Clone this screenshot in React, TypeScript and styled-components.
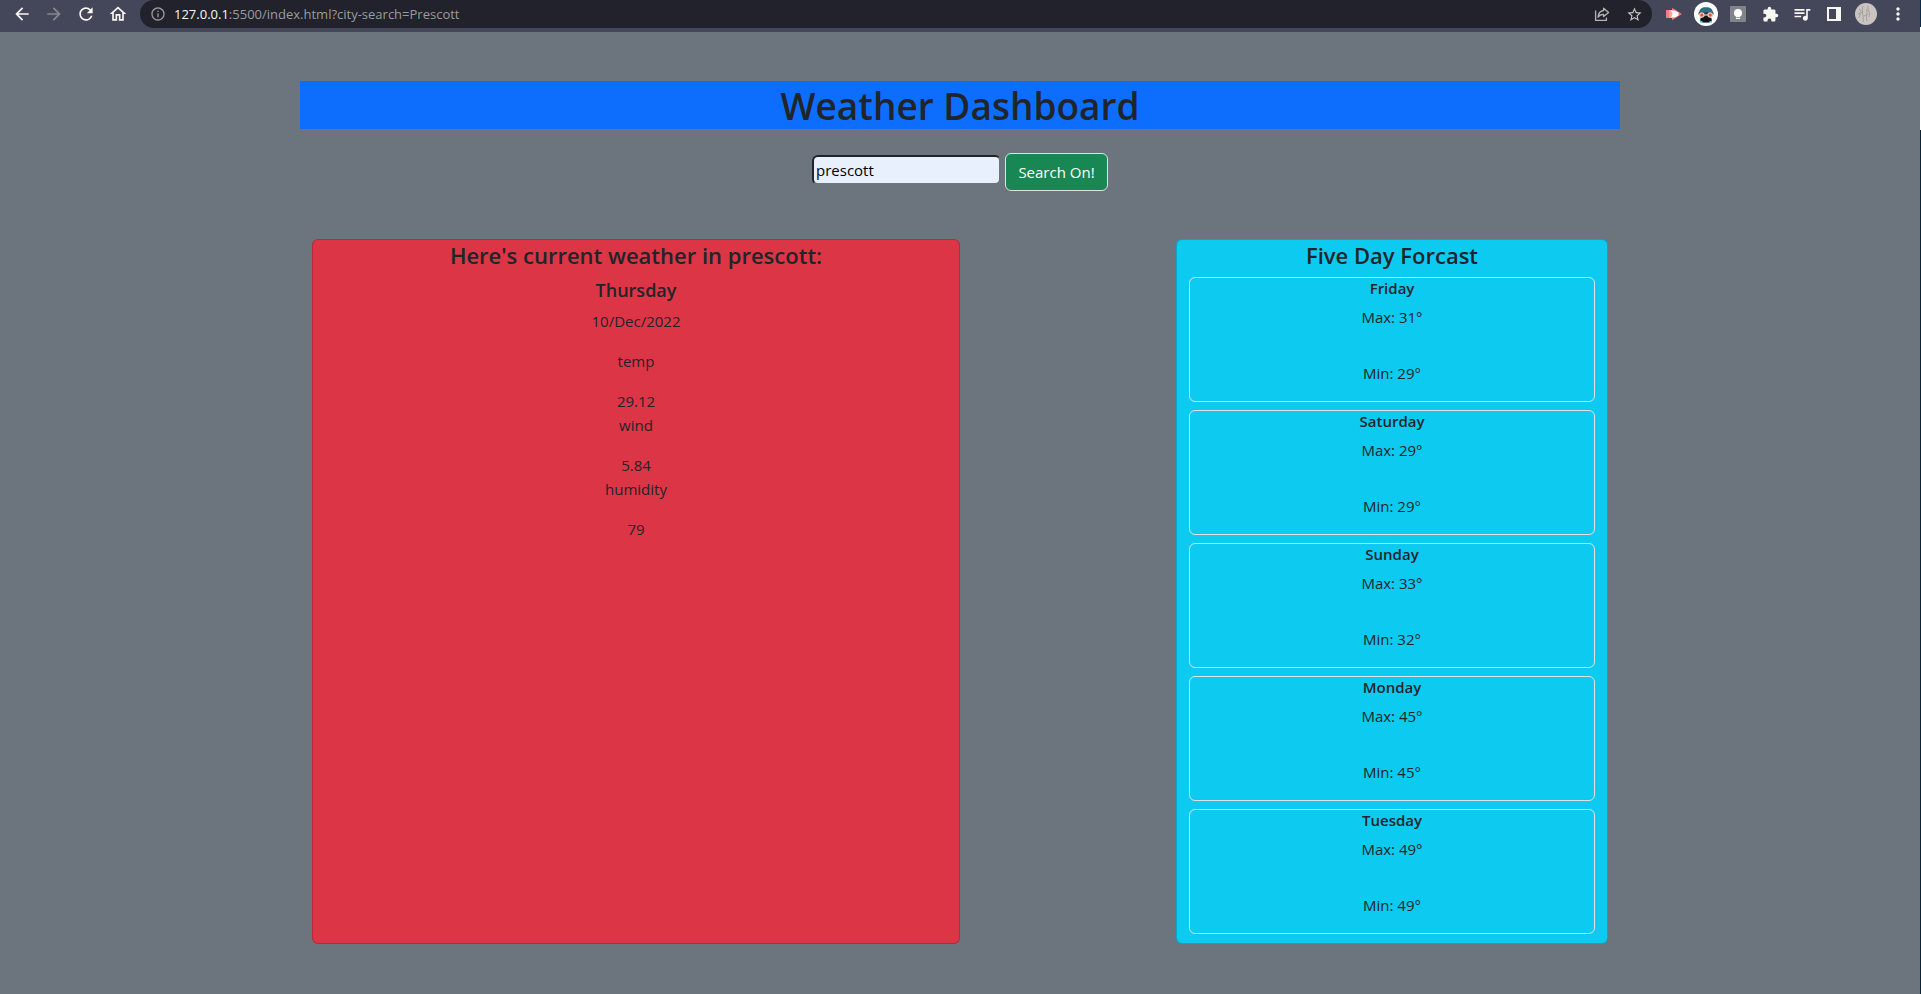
import React, { useState } from "react";
import styled, { createGlobalStyle } from "styled-components";
import {
  MdArrowBack,
  MdArrowForward,
  MdExtension,
  MdMoreVert,
  MdOutlineHome,
  MdOutlineInfo,
  MdQueueMusic,
  MdRefresh,
  MdStarBorder,
} from "react-icons/md";

const GlobalStyle = createGlobalStyle`
  *, *::before, *::after { box-sizing: border-box; }
  body {
    margin: 0;
    background: #6c757d;
    color: #212529;
    font-family: "Segoe UI", "Open Sans", "Noto Sans", sans-serif;
    font-size: 15px;
    line-height: 24px;
  }
  h1, h2, h3, h4, p { margin: 0; }
`;

const Screen = styled.div`
  display: flex;
  min-height: 100vh;
`;

const BrowserWindow = styled.div`
  flex: 1;
  min-width: 0;
`;

/* Sliver of the desktop and the scroll bar beyond the window's edge */
const DesktopEdge = styled.div`
  flex: 0 0 1px;
  background: linear-gradient(#0b2a45 27px, #ffffff 27px, #ffffff 130px, #0b2233 130px);
`;

const Toolbar = styled.header`
  display: flex;
  align-items: flex-start;
  height: 32px;
  padding: 0 6px;
  background: #44475a;
`;

const ToolButton = styled.button<{ $color?: string }>`
  display: flex;
  align-items: center;
  justify-content: center;
  flex: 0 0 32px;
  height: 28px;
  padding: 0;
  border: 0;
  background: none;
  color: ${(p) => p.$color ?? "#f8f8f2"};
`;

const AddressBar = styled.div`
  display: flex;
  align-items: center;
  flex: 1;
  min-width: 0;
  height: 28px;
  margin: 0 6px;
  padding: 0 2px 0 10px;
  border-radius: 14px;
  background: #21222c;
  color: #9a9b9f;
`;

const Url = styled.span`
  flex: 1;
  min-width: 0;
  overflow: hidden;
  margin-left: 8px;
  font-size: 13px;
  line-height: 20px;
  white-space: nowrap;
`;

const UrlHost = styled.span`
  color: #f8f8f2;
`;

const Container = styled.main`
  max-width: 1320px;
  margin: 0 auto;
  padding: 49px 0 48px;
  text-align: center;
`;

const PageTitle = styled.h1`
  padding-top: 2px;
  background: #0d6efd;
  font-size: 37px;
  font-weight: 600;
  line-height: 46px;
`;

const SearchForm = styled.form`
  display: flex;
  align-items: flex-start;
  justify-content: center;
  gap: 4px;
  margin: 24px 0 48px;
`;

const CityInput = styled.input`
  width: 189px;
  height: 30px;
  margin-top: 2px;
  padding: 0 2px;
  border: 2px solid;
  border-color: #212529 #6c757d #6c757d #212529;
  border-radius: 6px;
  outline: 0;
  background: #e8f0fe;
  color: #000;
  font: inherit;
`;

const SearchButton = styled.button`
  width: 103px;
  height: 38px;
  padding: 0;
  border: 1px solid #dee2e6;
  border-radius: 6px;
  background: #198754;
  color: #fff;
  font: inherit;
`;

const Row = styled.div`
  display: flex;
  justify-content: space-between;
  padding: 0 12px;
`;

const Panel = styled.section<{ $columns: number; $color: string }>`
  flex: 0 0 calc(100% / 12 * ${(p) => p.$columns});
  border: 1px solid rgba(0, 0, 0, 0.175);
  border-radius: 6px;
  background: ${(p) => p.$color};
`;

const PanelTitle = styled.h2`
  padding-top: 1px;
  margin-bottom: 8px;
  font-size: 22px;
  font-weight: 600;
  line-height: 28px;
`;

const Today = styled.h3`
  padding-top: 1px;
  margin-bottom: 7px;
  font-size: 18px;
  font-weight: 600;
  line-height: 24px;
`;

const DateLine = styled.p`
  margin-bottom: 16px;
`;

const Reading = styled.div`
  display: flex;
  flex-direction: column;
  gap: 16px;
`;

const DayList = styled.div`
  display: flex;
  flex-direction: column;
  gap: 8px;
  padding: 0 12px 9px;
`;

const DayCard = styled.article`
  padding-bottom: 16px;
  border: 1px solid #dee2e6;
  border-radius: 6px;
`;

const DayName = styled.h4`
  padding-top: 1px;
  margin-bottom: 7px;
  font-size: 15px;
  font-weight: 600;
  line-height: 19px;
`;

const DayTemps = styled.div`
  display: flex;
  flex-direction: column;
  gap: 32px;
`;

const ShareIcon = () => (
  <svg width="16" height="16" viewBox="0 0 16 16" fill="none" stroke="currentColor" strokeWidth="1.3">
    <path d="M1.6 4.5V14.4H12.4V11.6" />
    <path d="M9.6 2.2 14.6 6.4 9.6 10.6V8.3C6.8 8.3 5.2 9.3 4 11.2 4.3 7.6 6.2 4.9 9.6 4.5Z" strokeLinejoin="round" />
  </svg>
);

const RedArrowIcon = () => (
  <svg width="16" height="16" viewBox="0 0 16 16">
    <path d="M0 4H6V12H0Z" fill="#f47c7c" />
    <path d="M3 4H6V12H3Z" fill="#fba0a0" />
    <path d="M6 1.8 16 8 6 14.2Z" fill="#f47474" />
    <path d="M5 4.5H9L12.5 6.5V9.5L9 11.5H5L6.5 8Z" fill="#fff" />
  </svg>
);

const MaskIcon = () => (
  <svg width="24" height="24" viewBox="0 0 24 24">
    <circle cx="12" cy="12" r="12" fill="#fff" />
    <path d="M5 11.5C5 7 7.5 5.2 12 5.2S19 7 19 11.5Z" fill="#2d6e82" />
    <path d="M4.5 10.5H19.5V12.5H4.5Z" fill="#26323c" />
    <path d="M6 15.5H18V20.5H6Z" fill="#69b8cf" />
    <path d="M6.5 17 9.5 13.5H14.5L17.5 17V19H15.5V20.5H8.5V19H6.5Z" fill="#101418" />
    <circle cx="7.8" cy="13" r="2.8" fill="#f3c4b8" />
    <circle cx="16.2" cy="13" r="2.8" fill="#f3c4b8" />
    <circle cx="7.8" cy="13" r="1.6" fill="#e8522f" />
    <circle cx="16.2" cy="13" r="1.6" fill="#e8522f" />
  </svg>
);

const BulbIcon = () => (
  <svg width="16" height="16" viewBox="0 0 16 16">
    <rect width="16" height="16" rx="1" fill="#808589" />
    <circle cx="8" cy="7" r="4" fill="#fff" />
    <path d="M6 10H10V11.3H6ZM6 12H10V13H6Z" fill="#fff" />
  </svg>
);

const SidePanelIcon = () => (
  <svg width="14" height="14" viewBox="0 0 14 14" fill="currentColor">
    <path fillRule="evenodd" d="M0 0H14V14H0ZM2 2V12H9V2Z" />
  </svg>
);

const AvatarIcon = () => (
  <svg width="22" height="22" viewBox="0 0 22 22">
    <circle cx="11" cy="11" r="11" fill="#c9c3c1" />
    <g fill="none" stroke="#8e8886" strokeWidth="1" opacity="0.6">
      <path d="M4 6C7 7 5 11 4 15M8 3C6 8 9 11 8 19M11 6C14 8 10 12 12 18" />
      <path d="M13 3C12 7 16 9 14 14M3 11 8 9M9 13 13 11" />
    </g>
  </svg>
);

const readings = [
  { label: "temp", value: "29.12" },
  { label: "wind", value: "5.84" },
  { label: "humidity", value: "79" },
];

const forecast = [
  { day: "Friday", max: 31, min: 29 },
  { day: "Saturday", max: 29, min: 29 },
  { day: "Sunday", max: 33, min: 32 },
  { day: "Monday", max: 45, min: 45 },
  { day: "Tuesday", max: 49, min: 49 },
];

export default function App() {
  const [city, setCity] = useState("prescott");

  return (
    <Screen>
      <GlobalStyle />
      <BrowserWindow>
        <Toolbar>
          <ToolButton aria-label="Back"><MdArrowBack size={20} /></ToolButton>
          <ToolButton aria-label="Forward" $color="#87888f"><MdArrowForward size={20} /></ToolButton>
          <ToolButton aria-label="Reload"><MdRefresh size={20} /></ToolButton>
          <ToolButton aria-label="Home"><MdOutlineHome size={20} /></ToolButton>
          <AddressBar>
            <MdOutlineInfo size={16} />
            <Url>
              <UrlHost>127.0.0.1</UrlHost>:5500/index.html?city-search=Prescott
            </Url>
            <ToolButton aria-label="Share" $color="#b4b5b5"><ShareIcon /></ToolButton>
            <ToolButton aria-label="Bookmark" $color="#c4c5c3"><MdStarBorder size={17} /></ToolButton>
          </AddressBar>
          <ToolButton aria-label="Screen recorder"><RedArrowIcon /></ToolButton>
          <ToolButton aria-label="Private mode"><MaskIcon /></ToolButton>
          <ToolButton aria-label="Notes"><BulbIcon /></ToolButton>
          <ToolButton aria-label="Extensions"><MdExtension size={17} /></ToolButton>
          <ToolButton aria-label="Media controls"><MdQueueMusic size={20} /></ToolButton>
          <ToolButton aria-label="Side panel"><SidePanelIcon /></ToolButton>
          <ToolButton aria-label="Profile"><AvatarIcon /></ToolButton>
          <ToolButton aria-label="Menu"><MdMoreVert size={20} /></ToolButton>
        </Toolbar>

        <Container>
          <PageTitle>Weather Dashboard</PageTitle>

          <SearchForm onSubmit={(e) => e.preventDefault()}>
            <CityInput
              name="city-search"
              aria-label="City"
              value={city}
              onChange={(e) => setCity(e.target.value)}
            />
            <SearchButton type="submit">Search On!</SearchButton>
          </SearchForm>

          <Row>
            <Panel $columns={6} $color="#dc3545">
              <PanelTitle>Here's current weather in prescott:</PanelTitle>
              <Today>Thursday</Today>
              <DateLine>10/Dec/2022</DateLine>
              {readings.map((r) => (
                <Reading key={r.label}>
                  <p>{r.label}</p>
                  <p>{r.value}</p>
                </Reading>
              ))}
            </Panel>

            <Panel $columns={4} $color="#0dcaf0">
              <PanelTitle>Five Day Forcast</PanelTitle>
              <DayList>
                {forecast.map((f) => (
                  <DayCard key={f.day}>
                    <DayName>{f.day}</DayName>
                    <DayTemps>
                      <p>Max: {f.max}°</p>
                      <p>Min: {f.min}°</p>
                    </DayTemps>
                  </DayCard>
                ))}
              </DayList>
            </Panel>
          </Row>
        </Container>
      </BrowserWindow>
      <DesktopEdge />
    </Screen>
  );
}
